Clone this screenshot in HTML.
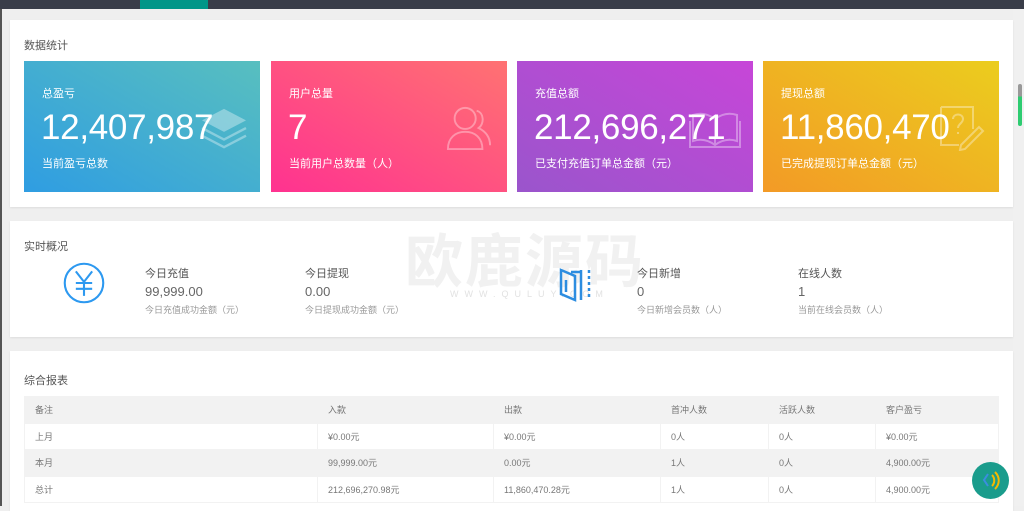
<!DOCTYPE html>
<html><head><meta charset="utf-8"><style>
*{margin:0;padding:0;box-sizing:border-box}
body{width:1024px;height:506px;overflow:hidden;background:#efefef;font-family:"Liberation Sans","Noto Sans CJK SC",sans-serif;position:relative}
.top{position:absolute;left:0;top:0;width:1024px;height:9px;background:#393d49}
.top i{position:absolute;left:140px;top:0;width:68px;height:9px;background:#009688}
.lb{position:absolute;left:0;top:9px;width:2px;height:497px;background:#555}
.sb{position:absolute;left:1013px;top:9px;width:11px;height:497px;background:#f0f0f0}
.sb i{position:absolute;left:5px;top:75px;width:4px;height:42px;border-radius:2px;background:linear-gradient(#999 0 30%,#2ecc71 30%)}
.panel{position:absolute;left:10px;width:1003px;background:#fff;box-shadow:0 1px 2px rgba(0,0,0,.08)}
.ttl{position:absolute;left:14px;font-size:11px;color:#555}
.card{position:absolute;top:41px;width:236px;height:131px;color:#fff}
.card .a{position:absolute;left:18px;top:24px;font-size:11px}
.card .b{position:absolute;left:17px;top:47px;font-size:35px;line-height:40px;letter-spacing:-.3px}
.card .c{position:absolute;left:18px;top:94px;font-size:11px}
.card svg{position:absolute;opacity:.35}
.it{position:absolute;top:44px;color:#666}
.it .a{font-size:11px;color:#555}
.it .b{font-size:13px;margin-top:3px;color:#666}
.it .c{font-size:9px;color:#999;margin-top:4px}
table{position:absolute;left:14px;top:45px;width:975px;border-collapse:collapse;font-size:9px;color:#777}
td{height:26.5px;padding-left:10px;border:1px solid #f2f2f2}
tr.g td{background:#f2f2f2}
</style></head><body>
<div class="top"><i></i></div><div class="lb"></div>
<div class="sb"><i></i></div>

<div class="panel" style="top:20px;height:187px">
<div class="ttl" style="top:17px">数据统计</div>
<div class="card" style="left:14px;background:linear-gradient(30deg,#2f9de2,#58bfbf)">
<div class="a">总盈亏</div><div class="b">12,407,987</div><div class="c">当前盈亏总数</div>
<svg style="left:176px;top:46px" width="48" height="44" viewBox="0 0 50 46"><path d="M25 2 L48 14 L25 26 L2 14Z" fill="#fff"/><path d="M2 22 L25 34 L48 22 M2 30 L25 42 L48 30" stroke="#fff" stroke-width="2.5" fill="none"/></svg>
</div>
<div class="card" style="left:261px;background:linear-gradient(30deg,#ff3290,#ff7272)">
<div class="a">用户总量</div><div class="b">7</div><div class="c">当前用户总数量（人）</div>
<svg style="left:175px;top:44px" width="46" height="46" viewBox="0 0 48 48" fill="none" stroke="#fff" stroke-width="2"><circle cx="20" cy="14" r="11"/><path d="M2 46 C2 34 10 28 20 28 C30 28 38 34 38 46Z"/><path d="M32 6 C40 8 40 20 34 24 C42 28 46 34 46 42"/></svg>
</div>
<div class="card" style="left:507px;background:linear-gradient(30deg,#9a55cc,#c746d8)">
<div class="a">充值总额</div><div class="b">212,696,271</div><div class="c">已支付充值订单总金额（元）</div>
<svg style="left:172px;top:50px" width="52" height="38" viewBox="0 0 52 38" fill="none" stroke="#fff" stroke-width="2"><path d="M26 8 C18 2 10 2 4 4 V30 C10 28 18 28 26 34 C34 28 42 28 48 30 V4 C42 2 34 2 26 8Z M26 8 V34 M1 10 V36 H51 V10"/></svg>
</div>
<div class="card" style="left:753px;background:linear-gradient(30deg,#f39a26,#ebcd1e)">
<div class="a">提现总额</div><div class="b">11,860,470</div><div class="c">已完成提现订单总金额（元）</div>
<svg style="left:176px;top:44px" width="46" height="46" viewBox="0 0 46 46" fill="none" stroke="#fff" stroke-width="2"><path d="M2 2 H34 V24 M20 40 H2 V2"/><path d="M14 14 C14 8 24 8 24 14 C24 18 19 19 19 23 M19 27 V29"/><path d="M22 40 L40 22 L44 26 L26 44 L21 45Z"/></svg>
</div>
</div>

<div class="panel" style="top:221px;height:116px">
<div class="ttl" style="top:17px">实时概况</div>
<div style="position:absolute;left:395px;top:-6px;font-size:58px;font-weight:bold;color:#f1f1f1;letter-spacing:2px">欧鹿源码</div>
<div style="position:absolute;left:440px;top:68px;font-size:9px;color:#e2e2e2;letter-spacing:6px">WWW.QULUY.COM</div>
<svg style="position:absolute;left:549px;top:47px" width="36" height="34" viewBox="0 0 36 34" fill="none" stroke="#2d8de0" stroke-width="2.5"><path d="M2 2 L16 8 V32 L2 26Z M7 12 V24 M12 4 H22 M22 2 V32" /><path d="M30 2 V32" stroke-dasharray="3 3"/></svg>
<svg style="position:absolute;left:53px;top:41px" width="42" height="42" viewBox="0 0 36 36" fill="none" stroke="#2d99f0" stroke-width="1.8"><circle cx="18" cy="18" r="16.5"/><path d="M11 8 L18 17 L25 8 M18 17 V29 M11 18 H25 M11 23 H25"/></svg>
<div class="it" style="left:135px"><div class="a">今日充值</div><div class="b">99,999.00</div><div class="c">今日充值成功金额（元）</div></div>
<div class="it" style="left:295px"><div class="a">今日提现</div><div class="b">0.00</div><div class="c">今日提现成功金额（元）</div></div>
<div class="it" style="left:627px"><div class="a">今日新增</div><div class="b">0</div><div class="c">今日新增会员数（人）</div></div>
<div class="it" style="left:788px"><div class="a">在线人数</div><div class="b">1</div><div class="c">当前在线会员数（人）</div></div>
</div>

<div class="panel" style="top:351px;height:160px">
<div class="ttl" style="top:21px">综合报表</div>
<table>
<colgroup><col style="width:293px"><col style="width:176px"><col style="width:167px"><col style="width:108px"><col style="width:107px"><col></colgroup>
<tr class="g"><td>备注</td><td>入款</td><td>出款</td><td>首冲人数</td><td>活跃人数</td><td>客户盈亏</td></tr>
<tr><td>上月</td><td>¥0.00元</td><td>¥0.00元</td><td>0人</td><td>0人</td><td>¥0.00元</td></tr>
<tr class="g"><td>本月</td><td>99,999.00元</td><td>0.00元</td><td>1人</td><td>0人</td><td>4,900.00元</td></tr>
<tr><td>总计</td><td>212,696,270.98元</td><td>11,860,470.28元</td><td>1人</td><td>0人</td><td>4,900.00元</td></tr>
</table>
</div>

<div style="position:absolute;left:972px;top:462px;width:37px;height:37px;border-radius:50%;background:#1a9c8c">
<svg width="37" height="37" viewBox="0 0 37 37" fill="none" stroke-width="2"><path d="M16 12 L12 18 L16 24" stroke="#3b8de0"/><path d="M20 13 C23 16 23 21 20 24 M23 10 C28 15 28 22 23 27" stroke="#f5b800"/></svg>
</div>
</body></html>
